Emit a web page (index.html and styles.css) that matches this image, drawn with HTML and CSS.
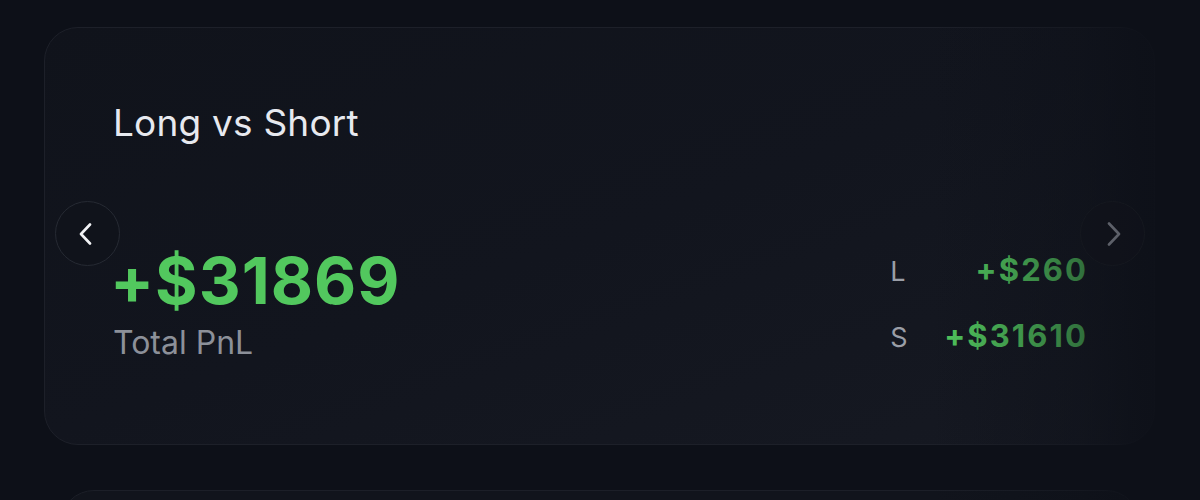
FILE: index.html
```html
<!DOCTYPE html>
<html>
<head>
<meta charset="utf-8">
<link rel="stylesheet" href="styles.css">
</head>
<body>
<div class="carousel">
  <section class="card">
    <h2 class="title">Long vs Short</h2>
    <div class="metrics">
      <div class="total">
        <div class="total-value">+$31869</div>
        <div class="total-label">Total PnL</div>
      </div>
      <div class="split">
        <span class="split-key">L</span><span class="split-val">+$260</span>
        <span class="split-key">S</span><span class="split-val">+$31610</span>
      </div>
    </div>
  </section>
  <div class="fade"></div>
  <button class="nav nav-prev" aria-label="Previous">
    <svg width="20" height="22" viewBox="0 0 20 22"><path d="M14 1.5 L5 11 L14 20.5" fill="none" stroke="#f2f3f6" stroke-width="2.6" stroke-linecap="round" stroke-linejoin="round"/></svg>
  </button>
  <button class="nav nav-next" aria-label="Next">
    <svg width="20" height="24" viewBox="0 0 20 24"><path d="M5 1.5 L15 12 L5 22.5" fill="none" stroke="#5d6069" stroke-width="2.6" stroke-linecap="round" stroke-linejoin="round"/></svg>
  </button>
  <section class="card card-next"></section>
</div>
</body>
</html>
```
FILE: styles.css
```css
html, body {
  margin: 0;
  padding: 0;
  background: #0d1018;
  height: 100%;
  overflow: hidden;
}
body {
  font-family: Inter, "Noto Sans", sans-serif;
}
.carousel {
  position: relative;
  width: 1200px;
  height: 500px;
  padding-top: 27px;
  box-sizing: border-box;
  overflow: hidden;
}
.card {
  margin-left: 44px;
  width: 1111px;
  height: 418px;
  box-sizing: border-box;
  border: 1px solid #1d2029;
  border-radius: 34px;
  background: linear-gradient(160deg, #10131b 0%, #12151e 50%, #161922 100%);
  padding: 73px 68px 0 68px;
  display: flex;
  flex-direction: column;
}
.title {
  margin: 0;
  font-size: 37px;
  line-height: 1.2;
  font-weight: 400;
  color: #e7e9ef;
  letter-spacing: 0.2px;
}
.metrics {
  margin-top: 103px;
  display: flex;
  justify-content: space-between;
  align-items: flex-start;
}
.total-value {
  margin-left: -3px;
  font-size: 65px;
  line-height: 1;
  font-weight: 700;
  color: #52c85e;
  letter-spacing: 1px;
}
.total-label {
  margin-top: 11px;
  font-size: 32px;
  line-height: 1.2;
  color: #8c9099;
}
.split {
  margin-top: 3px;
  display: grid;
  grid-template-columns: 54px auto;
  row-gap: 28px;
  align-items: baseline;
}
.split-key {
  font-size: 27px;
  line-height: 1.2;
  color: #9a9ea7;
}
.split-val {
  text-align: right;
  font-size: 31px;
  line-height: 1.2;
  font-weight: 700;
  color: #52c85e;
  letter-spacing: 2.1px;
  margin-right: -2px;
}
.fade {
  position: absolute;
  top: 0;
  right: 0;
  width: 270px;
  height: 500px;
  background: linear-gradient(90deg, rgba(13,16,24,0) 0%, rgba(13,16,24,0.45) 55%, rgba(13,16,24,0.85) 78%, rgba(13,16,24,0.97) 95%, rgba(13,16,24,1) 100%);
}
.nav {
  position: absolute;
  top: 201px;
  width: 65px;
  height: 65px;
  border-radius: 50%;
  box-sizing: border-box;
  padding: 0;
  display: flex;
  align-items: center;
  justify-content: center;
  cursor: pointer;
}
.nav-prev {
  left: 55px;
  border: 1.5px solid #262a33;
  background: #10131b;
}
.nav-prev svg {
  margin-left: -3px;
}
.nav-next {
  left: 1080px;
  border: 1.5px solid #15181f;
  background: rgba(16,19,27,0.6);
}
.nav-next svg {
  margin-left: 3px;
}
.card-next {
  margin-top: 45px;
  margin-left: 60px;
  width: 1080px;
  height: 100px;
  padding: 0;
  border-color: #1c1f28;
  background: #11141c;
}
```
